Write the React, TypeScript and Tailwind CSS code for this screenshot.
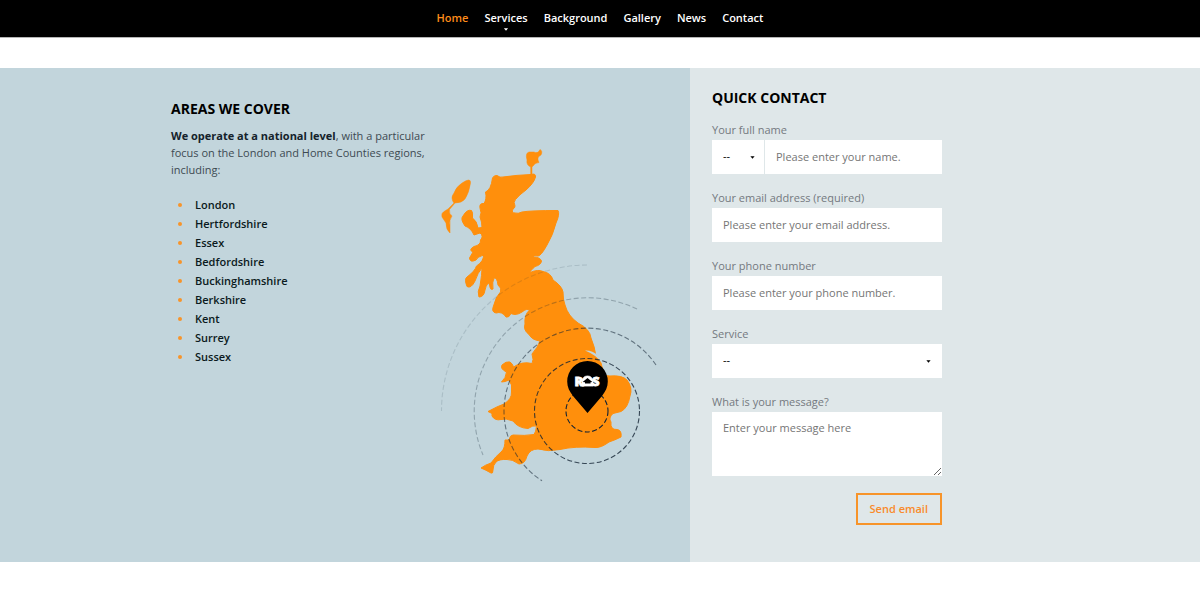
import React from "react";

const navItems = ["Home", "Services", "Background", "Gallery", "News", "Contact"];

const areas = [
  "London",
  "Hertfordshire",
  "Essex",
  "Bedfordshire",
  "Buckinghamshire",
  "Berkshire",
  "Kent",
  "Surrey",
  "Sussex",
];

function Caret({ className }: { className: string }) {
  return (
    <svg viewBox="0 0 6 4" aria-hidden="true" className={className} fill="currentColor">
      <path d="M0.2 0.4H5.8L3 3.8Z" />
    </svg>
  );
}

function Nav() {
  return (
    <header className="border-b border-[#b5b5b5] bg-black">
      <nav className="flex h-[37px] items-center justify-center gap-4 pb-px">
        {navItems.map((item) => (
          <a
            key={item}
            href="#"
            className={
              item === "Home"
                ? "relative text-[11px] font-semibold text-[#ff8c1a]"
                : "relative text-[11px] font-semibold text-white"
            }
          >
            {item}
            {item === "Services" && (
              <Caret className="absolute top-full left-1/2 mt-[2px] h-[3px] w-[5px] -translate-x-1/2" />
            )}
          </a>
        ))}
      </nav>
    </header>
  );
}

function CoverageMap() {
  return (
    <svg
      viewBox="440 145 220 340"
      className="h-[340px] w-[220px] shrink-0"
      role="img"
      aria-label="Map of Great Britain"
    >
      <g fill="#ff8f0c" stroke="#ff8f0c" strokeWidth="1" strokeLinejoin="round">
        <path d="M531 174.5Q536 173 535.5 177Q534 183 526 190Q519 195 515.5 199.5Q513 202 515 206Q515 208 513 209Q511 213 515 213Q518 214 522 212Q530 210.500 558 210.500Q560 214 556 223Q553 235 547 245Q541 256 538 256Q534 255 533 257Q540 257 541.500 261Q541 265 535 266.500Q530 271 530 272.500Q538 269 543 271.500Q551 273 553 280Q562 286 563 292Q563 300 565 305Q568 316 578 323Q590 329 591 338Q595 348 595.500 354L601 363Q603 370 604 375.500L610 376Q622 375 627 380Q633 388 630 396Q628 408 621 411.500L613 413.500Q608 418 611 422Q610 430 617 429.500Q622 430 621 437Q615 440 609 442Q601 448 595 447.500Q575 446 560 449.500Q548 452 538 449Q530 449 527 456Q525 464 519 464Q512 459 507 459.500Q499 459 496 462Q493 465 493 470Q493 474 491 473Q486 470 481 468Q485 465 491 463Q495 457 502 451Q505 448 505 440L509 440Q510 435 513 435Q525 436 534 434.500Q536 432 536.500 426Q533 425 528 428.500Q518 428 513 421Q506 418 501 419.500Q495 421 492 416L492 413.500L488 411.500Q498 406 504 404Q512 399 511.500 392L511.500 385L509 380Q505 382 501.500 382Q506 378 506.500 372Q500 369 502 365Q506 361 510 362Q513 364 513.500 367Q522 361 532 363.500Q534 360 532 354Q538 347 540 341Q532 340 529 334.500Q523 330 525 324Q524 315 529.500 310Q527 308 522 312Q516 316 511 313.500Q509 318 506 317Q502 311 496 313Q491 312 493.500 306Q496 296 500.500 292Q502 288 498 285Q497 277 494 278Q492 282 493 289Q490 291 489.500 284Q487 282 485 290Q484 297 479 297Q477 292 480 286Q482 274 482 268Q478 272 475 281Q471 289 467 286.500Q464 279 467 277Q475 271 476.500 266Q484 261 483.500 255Q477 257 476 260Q470 263 469.500 258L473 252Q468 250 474 246.500Q481 245 480.500 240Q484 236 480 233L474 235Q471 228 465 226Q460 219 463 216Q467 209 471.500 210.500Q473 212 472.500 218Q477 221 478 228L482 227.500Q482 222 480 217Q482 213 480 208Q479 203 484 203.500Q487 199 485.500 192Q491 190 492.500 178Q494 175 497 175.500Q500 178 503 177Q517 175 531 174.500Z" />
        <path
          d="M530.700 175V167Q526 165 527 160Q525 153 529 152L534 152Q538 154 540 149.500Q543 151 541 155Q536 157 539 162.500Q535 163 534 165L532 167V175Z"
          strokeWidth="0.500"
        />
        <path
          d="M462 183Q471 177 470.500 183Q469 193 465 199Q462 203 455 203L449.500 209.500Q449 214 452 216Q449 220 450 225V233Q446 230 446 223L442 217Q441 213 444 211.500L448 209L454 203Q450 198 454 193Q456 187 462 183Z"
          strokeWidth="0.500"
        />
      </g>
      <path d="M585 350.500Q592 350 598 355.500L601 362Q596 355 585 350.500Z" fill="#c2d5dc" />
      <g fill="none" stroke="#132333" strokeDasharray="5 2.500" strokeWidth="1.100">
        <circle cx="587" cy="411" r="21" />
        <circle cx="587" cy="411" r="52.500" opacity="0.800" />
        <path d="M656 365A83 83 0 0 0 504 411A83 83 0 0 0 542 480.800" opacity="0.550" />
        <path d="M637 309A113.500 113.500 0 0 0 483 455" opacity="0.280" />
        <path d="M587 265A146 146 0 0 0 441.500 411" opacity="0.130" />
      </g>
      <path
        d="M587.500 361A20.300 20.300 0 0 1 607.800 381.500C607.800 387 605.500 391.500 602 396L587.500 413L573 396C569.500 391.500 567.200 387 567.200 381.500A20.300 20.300 0 0 1 587.500 361Z"
        fill="#000"
      />
      <g fill="#fff" stroke="#fff" strokeWidth="0.800">
        <text x="574.500" y="386" className="font-['Open_Sans',sans-serif] text-[13px] font-extrabold">R</text>
        <text x="592" y="386" className="font-['Open_Sans',sans-serif] text-[13px] font-extrabold">S</text>
        <path d="M582 386V381Q583 376 587.500 376Q592 376 593 381V386Z" />
      </g>
      <path d="M582.700 382L587.500 378L592.300 382L590.500 382.200V383.500H585V382.200Z" fill="#000" />
    </svg>
  );
}

function Areas() {
  return (
    <section className="flex w-[57.5%] justify-end bg-[#c2d5dc]">
      <div className="flex w-[519px] shrink-0">
        <div className="w-[269px] shrink-0 pt-[31px]">
          <h2 className="text-[14px] leading-5 font-bold text-black">AREAS WE COVER</h2>
          <p className="mt-2 w-[256px] text-[11px] leading-[17px] text-[#3d4a52]">
            <strong className="font-bold text-[#14222b]">We operate at a national level</strong>, with a particular
            focus on the London and Home Counties regions, including:
          </p>
          <ul className="mt-[17px] text-[11px] leading-[19px] font-semibold text-[#0b1a20]">
            {areas.map((area) => (
              <li key={area} className="flex items-center gap-[13px] pl-[7px]">
                <span className="size-1 rounded-full bg-[#f7942a]" />
                {area}
              </li>
            ))}
          </ul>
        </div>
        <div className="pt-[77px]">
          <CoverageMap />
        </div>
      </div>
    </section>
  );
}

const labelClass = "block text-[11px] leading-5 text-[#74797f]";
const fieldClass =
  "block h-[34px] w-full appearance-none rounded-none bg-white px-[11px] pb-px text-[11px] text-black outline-none placeholder:text-[#757575]";

function QuickContact() {
  return (
    <section className="flex-1 bg-[#dfe7e9] pt-5 pb-[37px] pl-[22px]">
      <form className="w-[230px]" onSubmit={(event) => event.preventDefault()}>
        <h2 className="text-[14px] leading-5 font-bold text-black">QUICK CONTACT</h2>
        <div className="mt-3 flex flex-col gap-[14px]">
          <div>
            <label htmlFor="name" className={labelClass}>Your full name</label>
            <div className="flex gap-px">
              <div className="relative w-[52px] shrink-0">
                <select aria-label="Title" className={fieldClass}>
                  <option>--</option>
                </select>
                <Caret className="pointer-events-none absolute top-4 right-[9px] h-[3px] w-[5px]" />
              </div>
              <input id="name" type="text" placeholder="Please enter your name." className={fieldClass} />
            </div>
          </div>
          <div>
            <label htmlFor="email" className={labelClass}>Your email address (required)</label>
            <input id="email" type="email" placeholder="Please enter your email address." className={fieldClass} />
          </div>
          <div>
            <label htmlFor="phone" className={labelClass}>Your phone number</label>
            <input id="phone" type="tel" placeholder="Please enter your phone number." className={fieldClass} />
          </div>
          <div>
            <label htmlFor="service" className={labelClass}>Service</label>
            <div className="relative">
              <select id="service" className={fieldClass}>
                <option>--</option>
              </select>
              <Caret className="pointer-events-none absolute top-4 right-[11px] h-[3px] w-[5px]" />
            </div>
          </div>
          <div>
            <label htmlFor="message" className={labelClass}>What is your message?</label>
            <textarea
              id="message"
              placeholder="Enter your message here"
              className="block h-16 w-full resize bg-white px-[11px] py-2 text-[11px] leading-4 outline-none placeholder:text-[#757575]"
            />
          </div>
        </div>
        <div className="mt-[17px] flex justify-end">
          <button type="submit" className="h-8 border-2 border-[#f7942a] px-3 text-[11px] font-semibold text-[#f98b2b]">
            Send email
          </button>
        </div>
      </form>
    </section>
  );
}

export default function App() {
  return (
    <div className="bg-white font-['Open_Sans',sans-serif]">
      <Nav />
      <main className="mt-[30px] flex">
        <Areas />
        <QuickContact />
      </main>
    </div>
  );
}
